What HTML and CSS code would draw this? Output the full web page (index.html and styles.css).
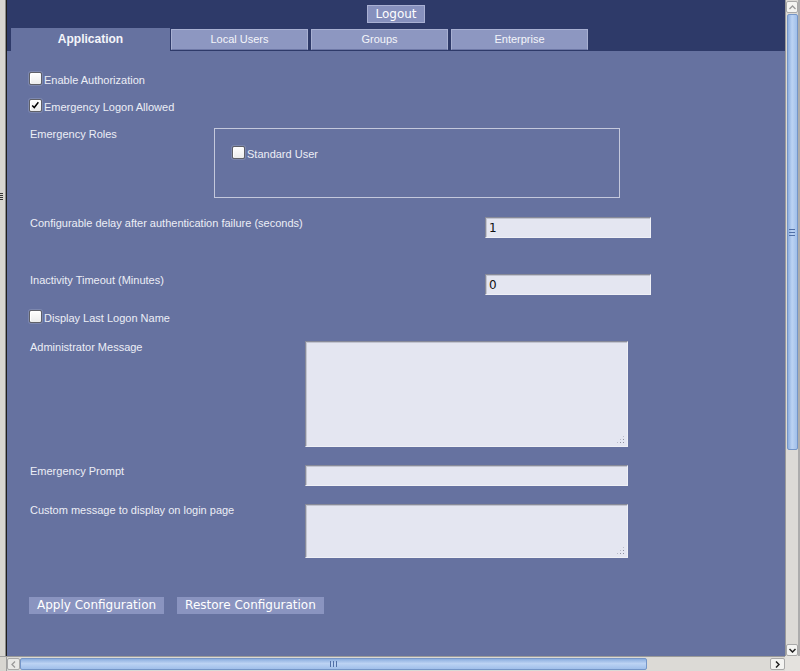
FILE: index.html
```html
<!DOCTYPE html>
<html lang="en">
<head>
    <meta charset="UTF-8">
    <title>Authorization Settings</title>
    <link rel="stylesheet" href="styles.css">
</head>
<body>
<div id="window">
    <div class="edge"><span class="edge-grip"></span></div>

    <div id="page">
        <div id="topbar">
            <button class="logout">Logout</button>
            <div class="tabs">
                <a class="tab active">Application</a>
                <a class="tab">Local Users</a>
                <a class="tab">Groups</a>
                <a class="tab">Enterprise</a>
            </div>
        </div>

        <form id="settings">
            <label class="check-row first"><input type="checkbox"><span>Enable Authorization</span></label>
            <label class="check-row second"><input type="checkbox" checked><span>Emergency Logon Allowed</span></label>

            <div class="row roles-row">
                <span class="field-label roles-label">Emergency Roles</span>
                <div class="roles-box">
                    <label class="check-row"><input type="checkbox"><span>Standard User</span></label>
                </div>
            </div>

            <div class="row delay-row">
                <span class="field-label wide">Configurable delay after authentication failure (seconds)</span>
                <input type="text" class="text-input short" value="1">
            </div>

            <div class="row timeout-row">
                <span class="field-label wide">Inactivity Timeout (Minutes)</span>
                <input type="text" class="text-input short" value="0">
            </div>

            <label class="check-row last-logon"><input type="checkbox"><span>Display Last Logon Name</span></label>

            <div class="row">
                <span class="field-label">Administrator Message</span>
                <div class="area-wrap"><textarea class="text-input long tall"></textarea></div>
            </div>

            <div class="row">
                <span class="field-label">Emergency Prompt</span>
                <input type="text" class="text-input long">
            </div>

            <div class="row">
                <span class="field-label">Custom message to display on login page</span>
                <div class="area-wrap"><textarea class="text-input long medium"></textarea></div>
            </div>

            <div class="actions">
                <button type="button">Apply Configuration</button>
                <button type="button">Restore Configuration</button>
            </div>
        </form>
    </div>

    <div class="vscroll">
        <span class="arrow"><svg width="7" height="5" viewBox="0 0 7 5"><path d="M0.5 4 L3.5 1 L6.5 4" fill="none" stroke="#9a9a9a" stroke-width="1.3"/></svg></span>
        <span class="vthumb"><span class="grip"></span></span>
        <span class="arrow down"><svg width="7" height="5" viewBox="0 0 7 5"><path d="M0.5 1 L3.5 4 L6.5 1" fill="none" stroke="#222" stroke-width="1.5"/></svg></span>
    </div>

    <div class="edge-corner"></div>

    <div class="hscroll">
        <span class="arrow left"><svg width="5" height="7" viewBox="0 0 5 7"><path d="M4 0.5 L1 3.5 L4 6.5" fill="none" stroke="#9a9a9a" stroke-width="1.3"/></svg></span>
        <span class="hthumb"><span class="grip"></span></span>
        <span class="arrow right"><svg width="5" height="7" viewBox="0 0 5 7"><path d="M1 0.5 L4 3.5 L1 6.5" fill="none" stroke="#222" stroke-width="1.5"/></svg></span>
    </div>

    <div class="corner"></div>
</div>
</body>
</html>
```

FILE: styles.css
```css
html, body { margin: 0; height: 100%; }
body {
    font-family: "Liberation Sans", Arial, sans-serif;
    font-size: 11px;
    color: #eceef6;
    background: #d8d6d1;
    overflow: hidden;
}
#window {
    display: grid;
    grid-template-columns: 7px 778px 15px;
    grid-template-rows: 656px 15px;
    width: 800px; height: 671px;
}

/* window chrome */
.edge {
    background: linear-gradient(to right, #d8d6d1 0 5px, #8a8a8a 5px 6px, #1e1e1e 6px);
    padding-top: 193px; box-sizing: border-box;
}
.edge-grip {
    display: block; width: 3px; height: 7px;
    background: repeating-linear-gradient(#333 0 1px, transparent 1px 2px);
}
.edge-corner { background: #d8d6d1; border-top: 1px solid #a0a0a0; border-right: 1px solid #a0a0a0; box-sizing: border-box; }
.corner { background: #e4e2de; }

.vscroll {
    background: #dcdad6;
    border-left: 1px solid #9a9a9a; border-right: 2px solid #acacac;
    display: flex; flex-direction: column; align-items: center;
    padding-top: 1px; box-sizing: border-box;
}
.hscroll {
    background: #dcdad6;
    border-top: 1px solid #9a9a9a;
    display: flex; align-items: center;
}
.arrow {
    width: 12px; height: 12px; box-sizing: border-box;
    background: #f4f4f2; border: 1px solid #a8a8a8; border-radius: 2px;
    display: flex; align-items: center; justify-content: center;
}
.arrow.down { margin-top: auto; }
.arrow.left { width: 13px; background: #e8e8e6; }
.arrow.right { width: 15px; margin-left: auto; }
.vthumb {
    width: 11px; height: 436px; margin-top: 1px; box-sizing: border-box;
    border: 1px solid #7596c8; border-radius: 2px;
    background: linear-gradient(to right, #8caedf, #bcd3f3 45%, #a0bfea);
    display: flex; align-items: center; justify-content: center;
}
.vthumb .grip {
    width: 6px; height: 7px;
    background: repeating-linear-gradient(#506fa6 0 1px, transparent 1px 3px);
}
.hthumb {
    width: 627px; height: 12px; box-sizing: border-box;
    border: 1px solid #7596c8; border-radius: 2px;
    background: linear-gradient(#8caedf, #bcd3f3 45%, #a0bfea);
    display: flex; align-items: center; justify-content: center;
}
.hthumb .grip {
    width: 7px; height: 6px;
    background: repeating-linear-gradient(to right, #506fa6 0 1px, transparent 1px 3px);
}

/* page */
#page { background: #6672a0; overflow: hidden; }
#topbar {
    background: #2e3a69;
    padding-top: 5px;
    display: flex; flex-direction: column; align-items: center;
}
.logout {
    font-family: "DejaVu Sans", sans-serif; font-size: 12px;
    color: #fff; background: #8690bd;
    border: 1px solid #a9b0d3;
    height: 18px; padding: 0 7px; line-height: 15px;
}
.tabs {
    align-self: stretch;
    display: flex; align-items: flex-end;
    height: 28px; padding-left: 4px;
}
.tab {
    box-sizing: border-box;
    width: 137px; height: 21px; margin: 0 0 1px 3px;
    background: #8d97c1;
    border: 1px solid #a8b0d2; border-bottom-color: #6e78a6;
    text-align: center; line-height: 19px;
    color: #f4f5fa;
}
.tab.active {
    width: 159px; height: 23px; margin: 0;
    background: #6672a0; border: none;
    font-size: 12px; font-weight: bold; line-height: 23px;
}
.tab.active + .tab { margin-left: 1px; }

#settings {
    padding-left: 22px;
    display: flex; flex-direction: column; align-items: flex-start;
}
.check-row { display: flex; align-items: flex-start; height: 13px; line-height: 13px; }
.check-row span { margin: 2px 0 0 2px; }
.check-row input {
    -webkit-appearance: none; appearance: none;
    width: 13px; height: 13px; margin: 0; flex: none;
    border: 1px solid #5f6068; border-radius: 2px;
    background: linear-gradient(#ffffff, #ececec);
    box-shadow: inset 1px 1px 0 #fff, 0 0 0 1px rgba(255,255,255,0.15);
}
.check-row input:checked {
    background: url("data:image/svg+xml,%3Csvg xmlns='http://www.w3.org/2000/svg' viewBox='0 0 11 11'%3E%3Cpath d='M1.5 5.5 L4 8 L9 1.5' fill='none' stroke='black' stroke-width='1.8'/%3E%3C/svg%3E") center / 9px 9px no-repeat,
                linear-gradient(#ffffff, #ececec);
}
.check-row.first { margin-top: 21px; }
.check-row.second { margin-top: 14px; }
.check-row.last-logon { margin-top: 15px; }

.row { display: flex; align-items: flex-start; margin-top: 18px; line-height: 13px; }
.roles-row { margin-top: 16px; }
.delay-row { margin-top: 19px; }
.timeout-row { margin-top: 36px; }
.field-label { width: 275px; padding-left: 1px; }
.field-label.wide { width: 455px; }
.field-label.roles-label { width: 184px; }

.roles-box {
    width: 406px; height: 70px; box-sizing: border-box;
    border: 1px solid #c4c8dc;
    padding: 17px;
}

.text-input {
    box-sizing: border-box; margin: 0;
    background: #e4e6f1;
    border: 1px solid; border-color: #878a99 #eff0f6 #eff0f6 #878a99;
    box-shadow: inset 1px 1px 0 #c2c4d0;
    font: 12px "DejaVu Sans", sans-serif; color: #111;
    padding: 0 3px;
    height: 21px;
}
.text-input.short { width: 166px; }
.text-input.long { width: 323px; }
textarea.text-input { resize: none; display: block; padding: 2px 3px; }
.text-input.tall { height: 106px; }
.text-input.medium { height: 54px; }
.area-wrap { position: relative; }
.area-wrap::after {
    content: ""; position: absolute; right: 3px; bottom: 3px;
    width: 9px; height: 9px;
    background: radial-gradient(circle at 1.5px 1.5px, #8e90a0 0.7px, transparent 0.9px) 0 0 / 3px 3px;
    clip-path: polygon(100% 0, 100% 100%, 0 100%);
}

.actions { display: flex; gap: 13px; margin-top: 39px; }
.actions button {
    font-family: "DejaVu Sans", sans-serif; font-size: 12px;
    color: #fff; background: #8a94c0;
    border: none; height: 17px; padding: 0 8px; line-height: 17px;
}
```
